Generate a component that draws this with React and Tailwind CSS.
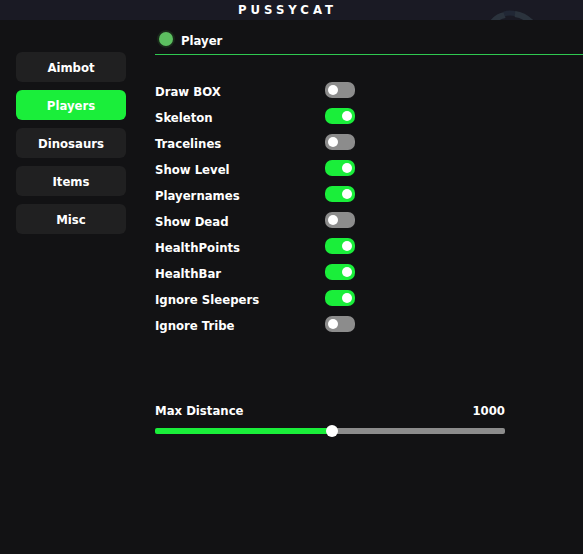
import React, { useState } from 'react';

const tabs = ['Aimbot', 'Players', 'Dinosaurs', 'Items', 'Misc'];

const options = [
  { id: 'draw-box', label: 'Draw BOX', enabled: false },
  { id: 'skeleton', label: 'Skeleton', enabled: true },
  { id: 'tracelines', label: 'Tracelines', enabled: false },
  { id: 'show-level', label: 'Show Level', enabled: true },
  { id: 'playernames', label: 'Playernames', enabled: true },
  { id: 'show-dead', label: 'Show Dead', enabled: false },
  { id: 'health-points', label: 'HealthPoints', enabled: true },
  { id: 'health-bar', label: 'HealthBar', enabled: true },
  { id: 'ignore-sleepers', label: 'Ignore Sleepers', enabled: true },
  { id: 'ignore-tribe', label: 'Ignore Tribe', enabled: false },
];

const MAX_DISTANCE = 1980;

const Toggle = ({ id, label, defaultChecked }) => (
  <div className="flex items-center">
    <label htmlFor={id} className="w-[170px] pt-1 leading-4">{label}</label>
    <input
      id={id}
      type="checkbox"
      defaultChecked={defaultChecked}
      className="h-4 w-[30px] cursor-pointer appearance-none rounded-[7px] bg-[#8c8c8c] p-[3px] before:block before:size-2.5 before:rounded-full before:bg-white checked:bg-[#1aee3a] checked:before:ml-auto"
    />
  </div>
);

const App = () => {
  const [tab, setTab] = useState('Players');
  const [distance, setDistance] = useState(1000);
  const percent = (distance / MAX_DISTANCE) * 100;

  return (
    <div className="min-h-screen bg-[#121214] font-['DejaVu_Sans_Condensed','Noto_Sans',sans-serif] text-[13px] font-bold text-white">
      <header className="relative flex h-5 items-center justify-center overflow-hidden bg-[#1a1a24] pr-2">
        <h1 className="leading-5 tracking-[4px]">PUSSYCAT</h1>
        <svg className="absolute top-0 right-9 h-5 w-16" viewBox="0 0 64 20" fill="none" aria-hidden="true">
          <path d="M10 22 Q15 16 22 15" stroke="#2b333d" strokeWidth="6" />
          <path d="M21 14 Q27 12 33 14" stroke="#212735" strokeWidth="5" />
          <path d="M32 14 Q41 15 49 23" stroke="#2b333d" strokeWidth="6" />
        </svg>
      </header>

      <div className="flex">
        <nav className="flex w-[126px] shrink-0 flex-col gap-2 pt-8 pl-4">
          {tabs.map((name) => (
            <button
              key={name}
              type="button"
              onClick={() => setTab(name)}
              className={`h-[30px] cursor-pointer rounded-md pt-0.5 ${
                tab === name ? 'bg-[#1aee3a]' : 'bg-[#202021]'
              }`}
            >
              {name}
            </button>
          ))}
        </nav>

        <main className="ml-[29px] min-w-0 flex-1">
          <div className="flex h-[35px] items-center gap-2 border-b border-[#2fc850] pt-2 pl-1">
            <span className="mb-1 size-3.5 rounded-full bg-[#5cc060] ring-2 ring-[#1a2a1b]"></span>
            <h2>Player</h2>
          </div>

          <div className="mt-[25px] flex flex-col gap-1.5">
            {options.map((option) => (
              <Toggle key={option.id} id={option.id} label={option.label} defaultChecked={option.enabled} />
            ))}
          </div>

          <div className="mt-[67px] max-w-[350px]">
            <div className="flex justify-between leading-5">
              <label htmlFor="distance">Max Distance</label>
              <output htmlFor="distance">{distance}</output>
            </div>
            <input
              id="distance"
              type="range"
              min="0"
              max={MAX_DISTANCE}
              value={distance}
              onChange={(e) => setDistance(Number(e.target.value))}
              style={{ backgroundImage: `linear-gradient(to right, #1aee3a ${percent}%, #8c8c8c ${percent}%)` }}
              className="mt-[7px] block h-1.5 w-full cursor-pointer appearance-none rounded-xs [&::-webkit-slider-thumb]:size-3 [&::-webkit-slider-thumb]:appearance-none [&::-webkit-slider-thumb]:rounded-full [&::-webkit-slider-thumb]:bg-white"
            />
          </div>
        </main>
      </div>
    </div>
  );
};

export default App;
